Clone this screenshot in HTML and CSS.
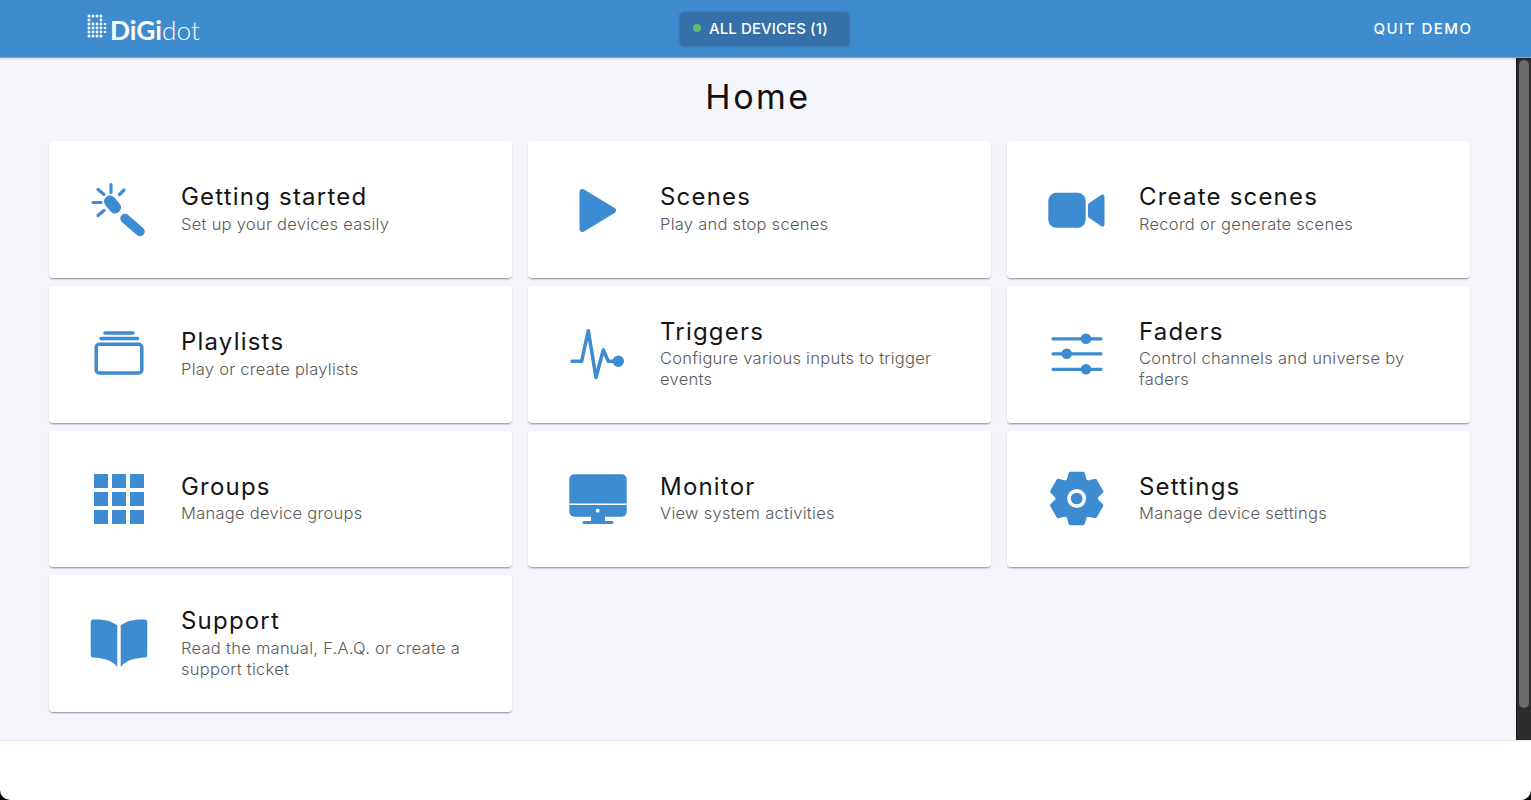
FILE: index.html
```html
<!DOCTYPE html>
<html lang="en">
<head>
<meta charset="utf-8">
<title>DiGidot Home</title>
<link rel="stylesheet" href="styles.css">
</head>
<body>
<div class="app">
  <header class="topbar">
    <div class="logo">
      <svg class="logo-dots" width="20" height="26" viewBox="0 0 20 26" fill="#fff">
        <circle cx="2" cy="2" r="1.500"/><circle cx="6" cy="2" r="1.500"/><circle cx="10" cy="2" r="1.500"/><circle cx="14" cy="2" r="1.500"/>
        <circle cx="2" cy="6" r="1.500"/><circle cx="14" cy="6" r="1.400"/>
        <circle cx="2" cy="10" r="1.500"/><circle cx="6" cy="10" r="1.400"/><circle cx="10" cy="10" r="1.400"/><circle cx="14" cy="10" r="1.400"/><circle cx="18" cy="10" r="1.300"/>
        <circle cx="2" cy="14" r="1.500"/><circle cx="6" cy="14" r="1.400"/><circle cx="10" cy="14" r="1.400"/><circle cx="14" cy="14" r="1.400"/><circle cx="18" cy="14" r="1.300"/>
        <circle cx="2" cy="18" r="1.500"/><circle cx="6" cy="18" r="1.400"/><circle cx="10" cy="18" r="1.400"/><circle cx="14" cy="18" r="1.400"/><circle cx="18" cy="18" r="1.300"/>
        <circle cx="2" cy="22" r="1.500"/><circle cx="6" cy="22" r="1.500"/><circle cx="10" cy="22" r="1.500"/><circle cx="14" cy="22" r="1.500"/>
      </svg>
      <span class="logo-text"><b>DiGi</b>dot</span>
    </div>
    <div class="device-btn"><span class="status-dot"></span>ALL DEVICES (1)</div>
    <div class="quit">QUIT DEMO</div>
  </header>

  <div class="middle">
    <main class="content">
      <h1 class="page-title">Home</h1>
      <div class="grid">
        <a class="card">
          <svg class="icon" viewBox="0 0 80 80" fill="none" stroke="#3d8bd0" stroke-linecap="round">
            <path d="M32 14.500v8M40.500 24.500l4.500-4.500M25 24.500L19 19.500M14 32.500h8M19 45.500l6-5" stroke-width="3.200"/>
            <path d="M31 31.500l5 6" stroke-width="12"/>
            <path d="M46 48.500l15 13" stroke-width="9.500"/>
          </svg>
          <div class="text"><div class="title">Getting started</div><div class="desc">Set up your devices easily</div></div>
        </a>
        <a class="card">
          <svg class="icon" viewBox="0 0 80 80" fill="#3d8bd0" stroke="#3d8bd0" stroke-linejoin="round">
            <path d="M24.500 22L55 40.500L24.500 59z" stroke-width="6"/>
          </svg>
          <div class="text"><div class="title">Scenes</div><div class="desc">Play and stop scenes</div></div>
        </a>
        <a class="card">
          <svg class="icon" viewBox="0 0 80 80" fill="#3d8bd0">
            <rect x="11.300" y="22.800" width="37.400" height="35" rx="8"/>
            <path d="M53 35L65.500 26.500V54.500L53 46z" stroke="#3d8bd0" stroke-width="4" stroke-linejoin="round"/>
          </svg>
          <div class="text"><div class="title">Create scenes</div><div class="desc">Record or generate scenes</div></div>
        </a>
        <a class="card">
          <svg class="icon" viewBox="0 0 80 80" fill="none" stroke="#3d8bd0" stroke-width="3.500" stroke-linecap="round">
            <path d="M26 19h28M22 24.500h36.500"/>
            <rect x="17.200" y="30.300" width="45.600" height="28.700" rx="3"/>
          </svg>
          <div class="text"><div class="title">Playlists</div><div class="desc">Play or create playlists</div></div>
        </a>
        <a class="card">
          <svg class="icon" viewBox="0 0 80 80" fill="none" stroke="#3d8bd0" stroke-width="3.500" stroke-linecap="round" stroke-linejoin="round">
            <path d="M14 47.200H23.700L30.300 16.700L38 63.500L45.300 36L50.300 47.200H60.300"/>
            <circle cx="60.300" cy="47.200" r="5" fill="#3d8bd0" stroke-width="1.500"/>
          </svg>
          <div class="text"><div class="title">Triggers</div><div class="desc">Configure various inputs to trigger events</div></div>
        </a>
        <a class="card">
          <svg class="icon" viewBox="0 0 80 80" fill="#3d8bd0" stroke="#3d8bd0" stroke-linecap="round">
            <path d="M16 24.800H64M16 39.800H64M16 55.300H64" stroke-width="3.200"/>
            <circle cx="49" cy="24.800" r="5.300" stroke="none"/>
            <circle cx="29.700" cy="39.800" r="5.300" stroke="none"/>
            <circle cx="49" cy="55.300" r="5.300" stroke="none"/>
          </svg>
          <div class="text"><div class="title">Faders</div><div class="desc">Control channels and universe by faders</div></div>
        </a>
        <a class="card">
          <svg class="icon" viewBox="0 0 80 80" fill="#3d8bd0">
            <rect x="15" y="15" width="14" height="14"/><rect x="33" y="15" width="14" height="14"/><rect x="51" y="15" width="14" height="14"/>
            <rect x="15" y="33" width="14" height="14"/><rect x="33" y="33" width="14" height="14"/><rect x="51" y="33" width="14" height="14"/>
            <rect x="15" y="51" width="14" height="14"/><rect x="33" y="51" width="14" height="14"/><rect x="51" y="51" width="14" height="14"/>
          </svg>
          <div class="text"><div class="title">Groups</div><div class="desc">Manage device groups</div></div>
        </a>
        <a class="card">
          <svg class="icon" viewBox="0 0 80 80" fill="#3d8bd0">
            <rect x="11.300" y="15.300" width="57.400" height="42.400" rx="5"/>
            <path d="M11.300 45.300H68.700" stroke="#fff" stroke-width="1.500"/>
            <circle cx="39.700" cy="51.700" r="1.900" fill="#fff"/>
            <path d="M33 57h14v5.500H33z"/>
            <path d="M26 63.500H54" stroke="#3d8bd0" stroke-width="3" stroke-linecap="round"/>
          </svg>
          <div class="text"><div class="title">Monitor</div><div class="desc">View system activities</div></div>
        </a>
        <a class="card">
          <svg class="icon" viewBox="0 0 80 80">
            <g transform="translate(39.700 39.500) scale(1.020)">
              <path fill="#3d8bd0" stroke="#3d8bd0" stroke-width="4" stroke-linejoin="round" d="M-6.050-24.250L6.050-24.250L8.030-17.200L10.900-15.560L17.980-17.370L24.030-6.890L18.930-1.660L18.930 1.660L24.030 6.890L17.980 17.370L10.900 15.560L8.030 17.200L6.050 24.250L-6.050 24.250L-8.030 17.200L-10.900 15.560L-17.980 17.370L-24.030 6.890L-18.930 1.660L-18.930-1.660L-24.030-6.890L-17.980-17.370L-10.900-15.560L-8.030-17.200z"/>
              <circle r="7.500" fill="#3d8bd0" stroke="#fff" stroke-width="3.500"/>
            </g>
          </svg>
          <div class="text"><div class="title">Settings</div><div class="desc">Manage device settings</div></div>
        </a>
        <a class="card">
          <svg class="icon" viewBox="0 0 80 80" fill="#3d8bd0">
            <path d="M14 15.500C22 15 32 16 38.300 21.500V63C33 56 24 54 14 53.500Q11.700 53.500 11.700 51V18Q11.700 15.600 14 15.500z"/>
            <path d="M66 15.500C58 15 48 16 41.700 21.500V63C47 56 56 54 66 53.500Q68.300 53.500 68.300 51V18Q68.300 15.600 66 15.500z"/>
          </svg>
          <div class="text"><div class="title">Support</div><div class="desc">Read the manual, F.A.Q. or create a support ticket</div></div>
        </a>
      </div>
    </main>
    <div class="scrollbar"><div class="thumb"></div></div>
  </div>

  <footer class="bottom"></footer>
</div>
</body>
</html>
```

FILE: styles.css
```css
* { box-sizing: border-box; }
html, body { margin: 0; height: 100%; background: #000; overflow: hidden; }
body { font-family: "Inter", "Liberation Sans", sans-serif; }
.app { height: 800px; display: flex; flex-direction: column; }

.topbar {
  flex: 0 0 58px;
  display: grid;
  grid-template-columns: 1fr auto 1fr;
  align-items: center;
  padding: 0 59px 0 57px;
  background: #3e8bce;
  border-bottom: 1px solid #8d9fb0;
  position: relative;
  z-index: 2;
  box-shadow: 0 1px 2px rgba(0,0,0,.15);
}
.logo { display: flex; align-items: center; gap: 3px; margin-left: 30px; color: #fff; }
.logo-dots { margin-top: -3px; }
.logo-text { font-family: "Lato", sans-serif; font-size: 26.300px; font-weight: 300; line-height: 30px; margin-top: 2px; }
.logo-text b { font-weight: 700; }
.device-btn {
  display: flex; align-items: center; gap: 8px;
  width: 169px; height: 33px; margin-top: -1px; padding-left: 13px;
  background: #3570a8; border-radius: 4px;
  box-shadow: 0 1px 3px rgba(0,0,0,.3);
  color: #fff; font-size: 15px; font-weight: 500; letter-spacing: .1px; white-space: nowrap;
}
.status-dot { width: 8px; height: 8px; border-radius: 50%; background: #5dbb7c; }
.quit { justify-self: end; color: #fff; font-size: 15px; font-weight: 500; letter-spacing: 1.5px; margin: -1px -.5px 0 0; }

.middle { flex: 1; display: flex; min-height: 0; }
.content { flex: 1; background: #f5f6fb; padding: 0 46px 0 49px; overflow: hidden; }
.page-title { margin: 18px 0 23.300px; padding-right: 3px; text-align: center; font-size: 34px; line-height: 42px; font-weight: 400; letter-spacing: 2.500px; color: #111; }
.grid { display: grid; grid-template-columns: repeat(3, 1fr); column-gap: 16px; row-gap: 8px; grid-auto-rows: 136.700px; }
.card {
  display: flex; align-items: center;
  padding: 0 30px;
  background: #fff; border-radius: 4px;
  box-shadow: 0 2px 2px -1px rgba(0,0,0,.35), 0 1px 2px rgba(0,0,0,.12);
}
.icon { flex: 0 0 80px; width: 80px; height: 80px; margin-right: 22px; }
.text { flex: 1; min-width: 0; margin-bottom: 1px; }
.title { font-size: 24px; line-height: 28px; color: #151515; letter-spacing: 1.200px; }
.desc { font-size: 16.500px; line-height: 21px; font-weight: 300; letter-spacing: .27px; color: #5a5a5a; margin-top: 2.600px; }

.scrollbar { flex: 0 0 15px; background: #2c2c2c; border-left: 1px solid #151515; padding: 2px 2px 0 2px; }
.thumb { height: 648px; border-radius: 6px; background: #6b6b6b; }

.bottom { flex: 0 0 60px; background: #fff; border-top: 1px solid #e6e7ec; border-radius: 0 0 10px 10px; }
```
